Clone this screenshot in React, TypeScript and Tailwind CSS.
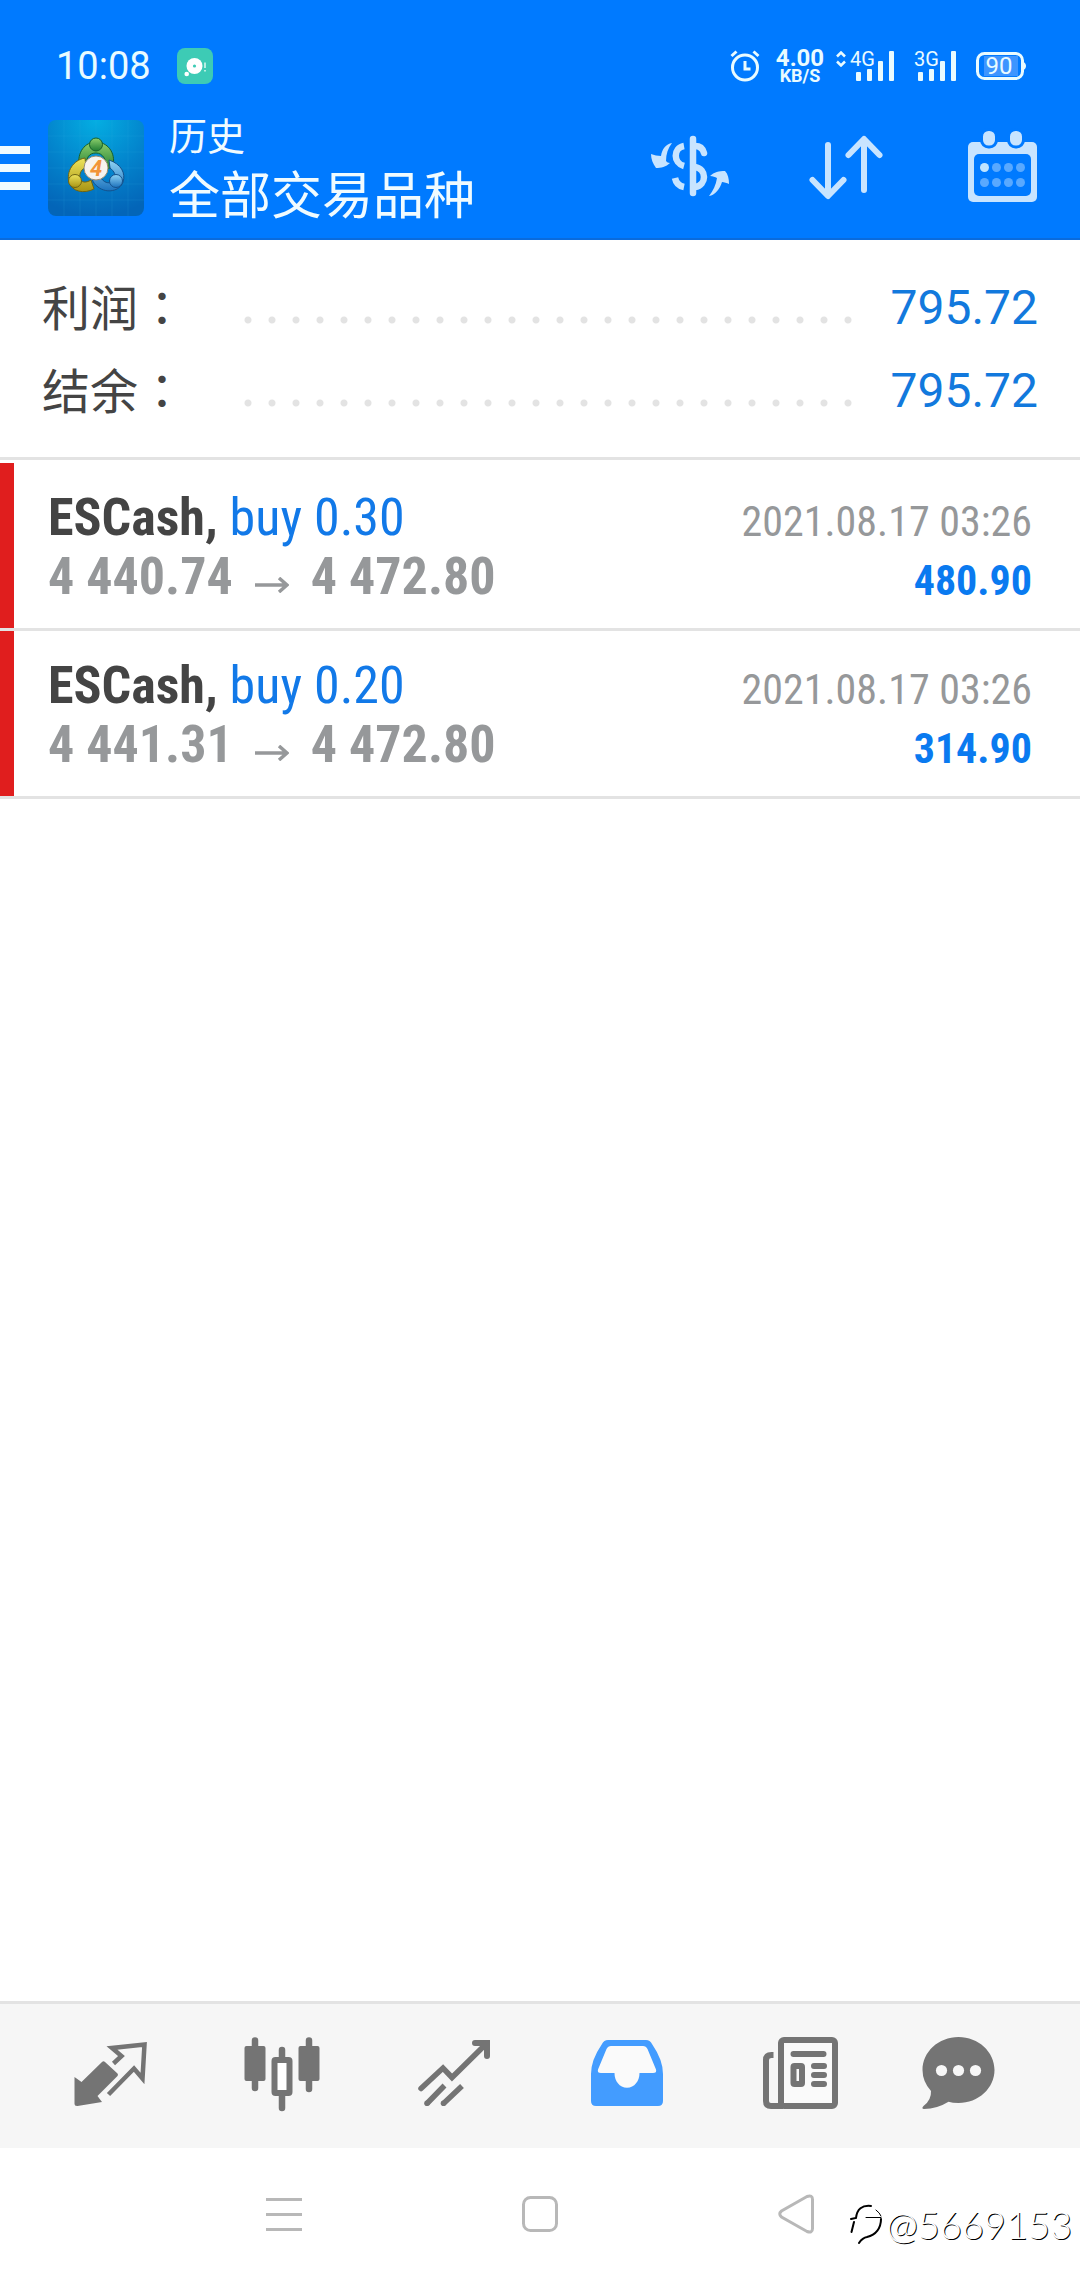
import React from 'react';

interface Trade {
  id: number;
  symbol: string;
  side: string;
  volume: string;
  open: string;
  close: string;
  time: string;
  profit: string;
}

const trades: Trade[] = [
  { id: 1, symbol: 'ESCash', side: 'buy', volume: '0.30', open: '4 440.74', close: '4 472.80', time: '2021.08.17 03:26', profit: '480.90' },
  { id: 2, symbol: 'ESCash', side: 'buy', volume: '0.20', open: '4 441.31', close: '4 472.80', time: '2021.08.17 03:26', profit: '314.90' },
];

const totals = [
  { label: '利润', value: '795.72' },
  { label: '结余', value: '795.72' },
];

function SignalBars() {
  return (
    <svg width="38" height="30" viewBox="0 0 38 30" fill="currentColor">
      <rect x="0" y="21" width="5" height="9" rx="1" />
      <rect x="11" y="18" width="5" height="12" rx="1" />
      <rect x="22" y="10" width="5" height="20" rx="1" />
      <rect x="33" y="0" width="5" height="30" rx="1" />
    </svg>
  );
}

function StatusBar() {
  return (
    <div className="flex h-24 items-center justify-between pt-11 pr-[54px] pb-2 pl-14 text-[#e9fbff]">
      <div className="flex items-center gap-[26px]">
        <span className="text-[38px] leading-none">10:08</span>
        <svg width="36" height="36" viewBox="0 0 36 36">
          <rect width="36" height="36" rx="8" fill="#3dcbb5" />
          <circle cx="17.5" cy="18" r="8" fill="#fff" />
          <circle cx="17.5" cy="18" r="1.6" fill="#3dcbb5" />
          <circle cx="9.7" cy="26" r="2.3" fill="#fff" />
          <path d="M28 14.5v5.5M28 22v1.5" stroke="#d5f5ee" strokeWidth="1.6" />
        </svg>
      </div>
      <div className="flex items-center">
        <svg className="mr-4" width="30" height="32" viewBox="0 0 30 32" fill="none" stroke="currentColor" strokeWidth="3">
          <circle cx="15" cy="17.5" r="12.5" />
          <path d="M15 11v8h5.500M1.500 6l5-4.500M28.500 6l-5-4.500" />
        </svg>
        <div className="mr-4 flex w-12 flex-col items-center font-bold">
          <span className="text-2xl leading-5">4.00</span>
          <span className="text-lg leading-4">KB/S</span>
        </div>
        <div className="relative mr-6 flex items-end pl-4">
          <span className="absolute -top-1 -left-1 flex items-center gap-1 text-xl leading-6">
            <svg width="10" height="16" viewBox="0 0 10 16" fill="none" stroke="currentColor" strokeWidth="2.500">
              <path d="M1 5.500L5 1.500l4 4M1 10.500l4 4 4-4" />
            </svg>
            4G
          </span>
          <SignalBars />
        </div>
        <div className="relative mr-5 flex items-end">
          <span className="absolute -top-1 -left-1 text-xl leading-6">3G</span>
          <SignalBars />
        </div>
        <div className="relative flex items-center">
          <svg width="50" height="28" viewBox="0 0 50 28" fill="none">
            <rect x="8" y="4" width="34" height="20" fill="#3d95ff" />
            <rect x="1.500" y="1.500" width="45" height="25" rx="7" stroke="currentColor" strokeWidth="3" />
            <path d="M47 9.500c4 2 4 7 0 9z" fill="currentColor" />
          </svg>
          <span className="absolute inset-0 pr-1 text-center text-2xl leading-7">90</span>
        </div>
      </div>
    </div>
  );
}

function AppLogo() {
  return (
    <svg width="96" height="96" viewBox="0 0 96 96">
      <defs>
        <radialGradient id="tile" cx="0.5" cy="0" r="1">
          <stop offset="0" stopColor="#04aee2" />
          <stop offset="0.55" stopColor="#0383cc" />
          <stop offset="1" stopColor="#0365b8" />
        </radialGradient>
        <linearGradient id="green" x1="0" y1="0" x2="0" y2="1">
          <stop offset="0" stopColor="#8ed06d" />
          <stop offset="1" stopColor="#1f7d33" />
        </linearGradient>
        <linearGradient id="yellow" x1="0" y1="0" x2="0" y2="1">
          <stop offset="0" stopColor="#eee45b" />
          <stop offset="1" stopColor="#a89414" />
        </linearGradient>
        <linearGradient id="blue" x1="0" y1="0" x2="0" y2="1">
          <stop offset="0" stopColor="#8fd3f5" />
          <stop offset="1" stopColor="#1c72bd" />
        </linearGradient>
      </defs>
      <rect width="96" height="96" rx="8" fill="url(#tile)" />
      <path d="M0 16h96M0 32h96M0 48h96M0 64h96M0 80h96M16 0v96M32 0v96M48 0v96M64 0v96M80 0v96" stroke="#3fb4ea" strokeOpacity="0.15" />
      <path d="M31 46c-2-14 6-24 17-24s20 10 17 24l-7 4c1-10-3-17-10-17s-10 5-9 11z" fill="url(#green)" stroke="#17602b" />
      <path d="M37 38c-12 2-19 14-16 24s15 12 25 7l-3-9c-5 3-10 3-11-2s2-9 6-11z" fill="url(#yellow)" stroke="#6e6412" />
      <path d="M61 40c12 4 17 13 14 22s-16 12-25 5c-3-2-5-5-6-8l9-1c4 6 10 6 13 2s0-9-4-12z" fill="url(#blue)" stroke="#14518c" />
      <circle cx="48" cy="24.500" r="6.500" fill="url(#green)" stroke="#17602b" />
      <circle cx="27" cy="61" r="6.500" fill="url(#yellow)" stroke="#6e6412" />
      <circle cx="68" cy="61" r="6.500" fill="url(#blue)" stroke="#14518c" />
      <circle cx="48" cy="48" r="12" fill="#f7f3ee" stroke="#9b8d74" />
      <text x="48" y="56" textAnchor="middle" fontSize="22" fontWeight="700" fontStyle="italic" fill="#f29438">4</text>
    </svg>
  );
}

function ExchangeIcon() {
  return (
    <svg width="84" height="80" viewBox="0 0 84 80" fill="none" stroke="currentColor" strokeWidth="6.500">
      <path d="M45 11v54" strokeLinecap="round" />
      <path d="M36 18c-11 2-11 17 0 20M27 50c1 5 4 8 9 9" />
      <path d="M47 18c5 0 8 3 9 7" strokeLinecap="round" />
      <path d="M47 39c12 2 12 18 0 20" />
      <g fill="currentColor" stroke="none">
        <path d="M24 15C18 16 14 21 13 28c-3 0-7-1-10-2 0 5 2 10 5 14 5 0 10-1 14-5-2 0-3-1-4-2 0-7 2-13 6-18z" />
        <path d="M61 68c6-1 11-7 13-14 2 0 5 1 7 2 0-5-1-10-4-13-6 0-11 1-15 5 3 0 5 1 7 2-1 7-4 13-8 18z" />
      </g>
    </svg>
  );
}

function SortIcon() {
  return (
    <svg width="84" height="80" viewBox="0 0 84 80" fill="none" stroke="currentColor" strokeWidth="6" strokeLinecap="round" strokeLinejoin="round">
      <path d="M24 17v50M8.500 52L24 68l15.500-16" />
      <path d="M60 62V12M44.500 27L60 11l15.500 16" />
    </svg>
  );
}

function CalendarIcon() {
  return (
    <svg width="84" height="80" viewBox="0 0 84 80">
      <rect x="8" y="14" width="69" height="60" rx="5" fill="currentColor" />
      <rect x="14" y="26" width="57" height="42" rx="5" fill="#007aff" />
      <rect x="21.500" y="1.500" width="15" height="17.500" rx="7" fill="currentColor" stroke="#007aff" strokeWidth="3" />
      <rect x="48.500" y="1.500" width="15" height="17.500" rx="7" fill="currentColor" stroke="#007aff" strokeWidth="3" />
      <circle cx="24.500" cy="39.500" r="4.500" fill="#bfe4ff" />
      <g fill="#59a9ff">
        <circle cx="36.500" cy="39.500" r="4.500" />
        <circle cx="48.500" cy="39.500" r="4.500" />
        <circle cx="60.500" cy="39.500" r="4.500" />
        <circle cx="24.500" cy="54.500" r="4.500" />
        <circle cx="36.500" cy="54.500" r="4.500" />
        <circle cx="48.500" cy="54.500" r="4.500" />
        <circle cx="60.500" cy="54.500" r="4.500" />
      </g>
    </svg>
  );
}

function QuotesIcon() {
  return (
    <svg width="104" height="80" viewBox="0 0 104 80">
      <path d="M18.500 41l7 5L46 26q1.500-1.500 3 0l12.500 11.500q1 1.200 0 2.400L41.500 60l4.500 6-24.500 4q-3 .2-3-2.500z" fill="currentColor" />
      <path d="M57.500 27.500l8-7.500L56 12l32.500-3.500-2 34L78 32.500 52.500 58.500" fill="none" stroke="currentColor" strokeWidth="4.500" />
    </svg>
  );
}

function ChartIcon() {
  return (
    <svg width="104" height="80" viewBox="0 0 104 80" fill="none" stroke="currentColor" strokeWidth="6.500" strokeLinecap="round">
      <path d="M26 4.500V52M80 4.500V53M53 14v9M53 60v12" />
      <rect x="15.500" y="10" width="21" height="35" rx="2" fill="currentColor" stroke="none" />
      <rect x="69.500" y="10" width="21" height="35" rx="2" fill="currentColor" stroke="none" />
      <rect x="45.500" y="24" width="15" height="33" rx="1" fill="#fff" strokeWidth="6" />
    </svg>
  );
}

function TradeIcon() {
  return (
    <svg width="104" height="80" viewBox="0 0 104 80" fill="none" stroke="currentColor" strokeWidth="5.500">
      <path d="M19 52.500l22-20.500 9 9.500L84 8" strokeLinecap="round" />
      <path d="M73 7h12v13" strokeWidth="6" strokeLinecap="round" />
      <path d="M42.500 49.500L25 67.500M60 50L41.500 67.500" />
      <g fill="currentColor" stroke="none">
        <circle cx="25" cy="67.300" r="2.800" />
        <circle cx="41.500" cy="67.300" r="2.800" />
      </g>
    </svg>
  );
}

function HistoryIcon() {
  return (
    <svg width="104" height="80" viewBox="0 0 104 80">
      <path d="M33 4h38q4 0 6 4 11 16 11 30v27q0 5-5 5H21q-5 0-5-5V38Q16 24 27 8q2-4 6-4z" fill="currentColor" />
      <path d="M36 10h32q3 0 4.500 3L81 33.500q1 3.500-3 3.500H64.500c0 8-5 14.700-12.500 14.700S39.500 45 39.500 37H26q-4 0-3-3.500L31.500 13Q33 10 36 10z" fill="#fafafa" />
    </svg>
  );
}

function NewsIcon() {
  return (
    <svg width="104" height="80" viewBox="0 0 104 80" fill="none" stroke="currentColor" strokeWidth="6">
      <rect x="33" y="4" width="54" height="66" rx="3" fill="#fafafa" />
      <path d="M25.500 19h-2q-5.500 0-5.500 5v41q0 5 5 5h12" />
      <path d="M45.500 18h30M66 30h10M66 39h10M66 48h10" strokeLinecap="round" />
      <rect x="45.500" y="30" width="8.500" height="18" rx="1" fill="#fafafa" />
    </svg>
  );
}

function ChatIcon() {
  return (
    <svg width="104" height="80" viewBox="0 0 104 80">
      <path d="M37.500 1C57.500 1 73.500 16 73.500 34S57.500 67 37.500 67q-6 0-10-1.200Q16 73 3 73q-3-.5-.5-3 8-6 7.500-15-8.500-9.500-8.500-21C1.500 16 17.500 1 37.500 1z" fill="currentColor" />
      <g fill="#f7f7f7">
        <circle cx="20.500" cy="34.500" r="5.600" />
        <circle cx="37.500" cy="34.500" r="5.600" />
        <circle cx="54.500" cy="34.500" r="5.600" />
      </g>
    </svg>
  );
}

const tabs = [
  { name: 'Quotes', icon: QuotesIcon },
  { name: 'Chart', icon: ChartIcon },
  { name: 'Trade', icon: TradeIcon },
  { name: 'History', icon: HistoryIcon, active: true },
  { name: 'News', icon: NewsIcon },
  { name: 'Chat', icon: ChatIcon },
];

function Header() {
  return (
    <header className="bg-[#007aff] shadow-[inset_0_-2px_0_#0a6bdc]">
      <StatusBar />
      <div className="flex h-36 items-center">
        <button className="flex w-[30px] flex-col gap-2.5" aria-label="Menu">
          <span className="h-2 w-full bg-[#f0fbff]" />
          <span className="h-2 w-full bg-[#f0fbff]" />
          <span className="h-2 w-full bg-[#f0fbff]" />
        </button>
        <div className="ml-[18px]">
          <AppLogo />
        </div>
        <div className="ml-[25px] flex-1 text-[#f0fbff]">
          <p className="text-[38px] leading-[58px]">历史</p>
          <h1 className="text-[51px] leading-[62px]">全部交易品种</h1>
        </div>
        <div className="flex text-[#c8e4ff]">
          <button className="flex w-[156px] justify-center" aria-label="Symbols">
            <ExchangeIcon />
          </button>
          <button className="flex w-[156px] justify-center" aria-label="Sort">
            <SortIcon />
          </button>
          <button className="flex w-[156px] justify-center" aria-label="Period">
            <CalendarIcon />
          </button>
        </div>
      </div>
    </header>
  );
}

function TradeRow({ trade }: { trade: Trade }) {
  return (
    <li className="flex h-[168px] justify-between border-b-3 border-[#e3e3e3] font-['Roboto_Condensed','Liberation_Sans_Narrow',Roboto,sans-serif]">
      <div className="w-3.5 bg-[#e01e1e]" />
      <div className="flex flex-1 justify-between pt-[25px] pr-12 pl-[34px]">
        <div className="text-[52px] leading-[59px]">
          <p>
            <span className="font-bold text-[#444]">{trade.symbol},</span>{' '}
            <span className="text-[#1279e8]">
              {trade.side} {trade.volume}
            </span>
          </p>
          <p className="flex items-center font-bold text-[#96989a]">
            {trade.open}
            <svg className="mx-[22px] mt-4" width="34" height="16" viewBox="0 0 34 16" fill="none" stroke="currentColor" strokeWidth="3.500">
              <path d="M0 8h32M24 1l8 7-8 7" />
            </svg>
            {trade.close}
          </p>
        </div>
        <div className="pt-1 text-right text-[42px] leading-[59px]">
          <p className="text-[#96989a]">{trade.time}</p>
          <p className="font-bold text-[#0a7af0]">{trade.profit}</p>
        </div>
      </div>
    </li>
  );
}

export default function App() {
  return (
    <div className="flex min-h-screen flex-col bg-white font-[Roboto,'Noto_Sans_CJK_SC',sans-serif]">
      <Header />

      <main className="flex-1">
        {/* Totals */}
        <dl className="border-b-3 border-[#e3e3e3] px-[42px] pt-[26px] pb-[25px] text-5xl">
          {totals.map((row) => (
            <div key={row.label} className="flex h-[83px] items-center">
              <dt className="text-[#444]">
                {row.label}
                {/* the TC face centres the full-width colon */}
                <span className="font-['Noto_Sans_CJK_TC',sans-serif]">：</span>
              </dt>
              <div className="mt-6 mr-7 ml-[50px] h-2 flex-1 bg-[radial-gradient(circle,#e3e3e3_3px,transparent_4px)] bg-[length:24px_8px]" />
              <dd className="text-[#1279dd]">{row.value}</dd>
            </div>
          ))}
        </dl>

        {/* Closed trades */}
        <ul className="pt-[3px]">
          {trades.map((trade) => (
            <TradeRow key={trade.id} trade={trade} />
          ))}
        </ul>
      </main>

      {/* App tabs */}
      <nav className="flex h-[147px] items-center border-t-3 border-[#e3e3e3] bg-[#f6f6f6] px-[21px]">
        {tabs.map(({ name, icon: Icon, active }) => (
          <button
            key={name}
            className={active ? 'flex flex-1 justify-center text-[#439cff]' : 'flex flex-1 justify-center text-[#747474]'}
            aria-label={name}
          >
            <Icon />
          </button>
        ))}
      </nav>

      {/* System buttons */}
      <div className="relative flex h-[132px] items-center justify-center gap-[220px] bg-white text-[#b8b8b8]">
        <button aria-label="Recent apps">
          <svg width="36" height="40" viewBox="0 0 36 40" stroke="currentColor" strokeWidth="3">
            <path d="M0 5.500h36M0 20.500h36M0 35.500h36" />
          </svg>
        </button>
        <button aria-label="Home">
          <svg width="36" height="40" viewBox="0 0 36 40" fill="none" stroke="currentColor" strokeWidth="3">
            <rect x="1.500" y="3.500" width="33" height="33" rx="7" />
          </svg>
        </button>
        <button aria-label="Back">
          <svg width="36" height="40" viewBox="0 0 36 40" fill="none" stroke="currentColor" strokeWidth="3">
            <path d="M29 2.500L3.500 17q-3.500 3 0 6L29 37.500q5.500 2 5.500-3v-29q0-5-5.500-3z" />
          </svg>
        </button>
        <div className="absolute right-2 bottom-9 flex items-center gap-1 font-[Lato,sans-serif] text-[38px] leading-none font-light text-white [text-shadow:1px_1px_0_#000]">
          <svg width="32" height="40" viewBox="0 0 32 40" fill="none" stroke="#000" strokeLinecap="round">
            <path d="M1 15l5-1C7 5 12 1 21 2M4 18L1.500 28" strokeWidth="2" />
            <path d="M16 13.500h15M26 6q4 3 5 6" strokeWidth="1" />
            <path d="M31 15c0 9-5 16-14 18-4 .5-6 3-8 6" strokeWidth="2" />
          </svg>
          @5669153
        </div>
      </div>
    </div>
  );
}
